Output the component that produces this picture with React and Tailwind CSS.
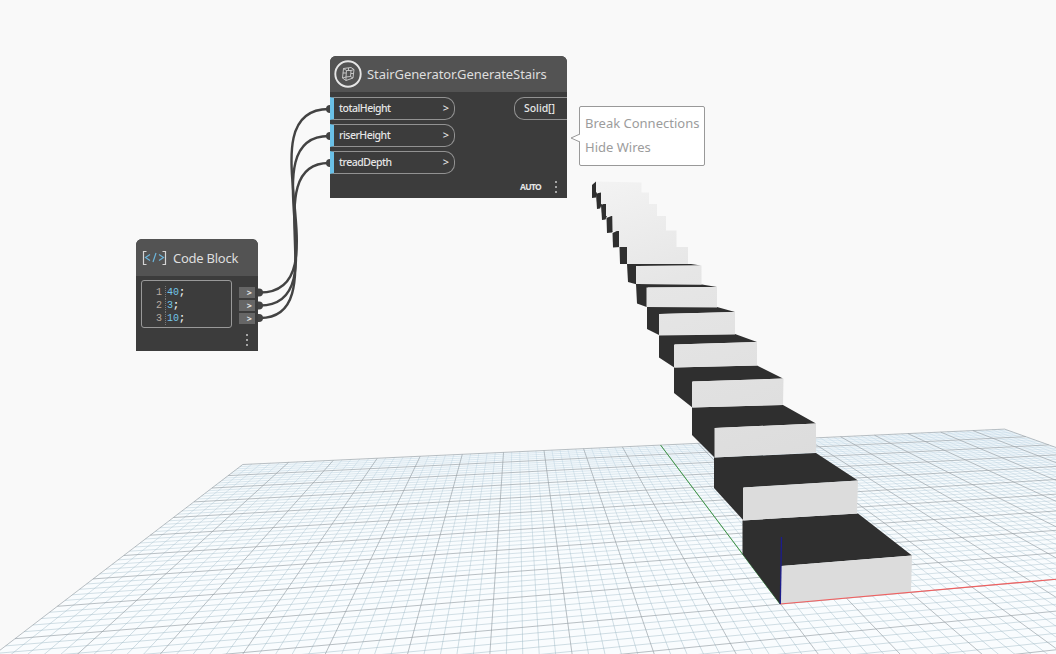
import React from "react";

// Ground-plane samples: [u, v, screenX, screenY], one unit per major grid square.
const SAMPLES = [
  [-10, 10, 243, 464.5],
  [0, 10, 660.5, 445],
  [5, 10, 840, 437],
  [10, 10, 1005, 429],
  [-10, 5, 150, 535],
  [-10, 1, 15, 639],
  [0, 0, 780, 604],
  [1, 0, 848, 598.3],
  [2, 0, 911, 592.5],
  [4, 0, 1030, 581.6],
];

// Least-squares fit of the plane-to-screen perspective transform.
function fitHomography(samples) {
  const n = 8;
  const m = Array.from({ length: n }, () => new Array(n + 1).fill(0));
  const add = (row) => {
    for (let i = 0; i < n; i++) for (let j = 0; j <= n; j++) m[i][j] += row[i] * row[j];
  };
  samples.forEach(([U, V, X, Y]) => {
    const u = U / 10, v = V / 10, x = X / 1000, y = Y / 1000;
    add([u, v, 1, 0, 0, 0, -u * x, -v * x, x]);
    add([0, 0, 0, u, v, 1, -u * y, -v * y, y]);
  });
  for (let c = 0; c < n; c++) {
    let p = c;
    for (let r = c + 1; r < n; r++) if (Math.abs(m[r][c]) > Math.abs(m[p][c])) p = r;
    [m[c], m[p]] = [m[p], m[c]];
    for (let r = 0; r < n; r++) {
      if (r === c) continue;
      const f = m[r][c] / m[c][c];
      for (let k = c; k <= n; k++) m[r][k] -= f * m[c][k];
    }
  }
  return m.map((row, i) => row[n] / row[i]);
}

const H = fitHomography(SAMPLES);
const project = (U, V) => {
  const u = U / 10, v = V / 10;
  const w = H[6] * u + H[7] * v + 1;
  return [
    (1000 * (H[0] * u + H[1] * v + H[2])) / w,
    (1000 * (H[3] * u + H[4] * v + H[5])) / w,
  ];
};
const NEAR = -2.6;
const seg = (a, b) =>
  `M${a[0].toFixed(1)} ${a[1].toFixed(1)}L${b[0].toFixed(1)} ${b[1].toFixed(1)}`;

const minor = [];
const major = [];
for (let i = -50; i <= 50; i++) {
  (i % 5 === 0 ? major : minor).push(seg(project(i / 5, 10), project(i / 5, NEAR)));
}
for (let i = Math.ceil(NEAR * 5); i <= 50; i++) {
  (i % 5 === 0 ? major : minor).push(seg(project(-10, i / 5), project(10, i / 5)));
}
const plane = [project(-10, 10), project(10, 10), project(10, NEAR), project(-10, NEAR)]
  .map((p) => p.join(","))
  .join(" ");

// Sides and treads of the solid (dark), then the risers (light).
const DARK = [
  "592,185 596,181.5 597,193 596,197.5 592,198",
  "596,194 601,192 602,204 600,208.5 597,209",
  "601,205 606,203 607,216 605.5,219.5 602,220",
  "606.5,218 612.5,215.5 613,231 612,232.5 607,233",
  "612.5,233 619,230 620,247 613,247.5",
  "619.5,247 627,246.5 628,264 620,264",
  "627,264 691,264 701,265.5 637,266 637,284.5 628,282",
  "636,284 702,284.5 717,287 648,287.5 648,307.5 637,303.5",
  "647,307 717,307 735,312 660,314 660,335.5 647,329",
  "659,335 735,334 757,342 675,344.5 675,368 659,357.5",
  "674,367.5 757,365.5 783,378.5 693,381.5 693,408 674,393",
  "692,407.5 783,405 816,423.5 715,428 715,458 692,435",
  "714,457.5 816,453 858,480.5 744,487.5 744,521 714,488",
  "742.5,520.5 858,513.5 912,555.5 781.5,566 780,604 742.5,554",
];
const LIGHT = [
  "596,181.5 641.5,182.5 641.5,192.5 649,192.5 649,204 657,204 657,216 666,216 666,230.5 676.5,230.5 676.5,247 688,247 688,264 627,264 627,247 619,247 619,231 612.5,231 612.5,216 606,216 606,204 601,204 601,192.5 596,192.5",
  "636,266 701.5,265.5 701.5,284.5 636,284",
  "646.5,287.5 717,287 717,307.5 646.5,307",
  "659,314 735,312 735,334.5 659,335.5",
  "674,344.5 757,342 757,365.5 674,367.5",
  "692,381.5 783.5,378.5 783,405 692,407.5",
  "714.5,428 816,423.5 816,452.5 714.5,457.5",
  "743,487.5 858,480.5 857,513.5 743,520.5",
  "781,566 912,555.5 911,592.5 780.5,604",
];

function Scene() {
  return (
    <svg className="[grid-area:1/1]" width="1056" height="654" viewBox="0 0 1056 654">
      <defs>
        <linearGradient id="haze" x1="0" y1="429" x2="0" y2="560" gradientUnits="userSpaceOnUse">
          <stop offset="0" stopColor="#f1f7fb" />
          <stop offset="0.5" stopColor="#f7fbfd" />
          <stop offset="1" stopColor="#f9fcfe" />
        </linearGradient>
        <linearGradient id="riser" x1="592" y1="181" x2="700" y2="500" gradientUnits="userSpaceOnUse">
          <stop offset="0" stopColor="#f3f3f3" />
          <stop offset="0.35" stopColor="#e6e6e6" />
          <stop offset="1" stopColor="#dcdcdc" />
        </linearGradient>
        <linearGradient id="fine" x1="0" y1="429" x2="0" y2="654" gradientUnits="userSpaceOnUse">
          <stop offset="0" stopColor="#a9c8dc" stopOpacity="0.36" />
          <stop offset="0.35" stopColor="#a3bdcb" stopOpacity="0.48" />
          <stop offset="1" stopColor="#9db8c4" stopOpacity="0.6" />
        </linearGradient>
      </defs>
      <polygon points={plane} fill="url(#haze)" />
      <path d={minor.join("")} stroke="url(#fine)" strokeWidth="0.8" fill="none" />
      <path d={major.join("")} stroke="#949ea4" strokeOpacity="0.72" strokeWidth="0.9" fill="none" />
      <path d={seg(project(0, 10), [780, 604])} stroke="#3f9a48" strokeWidth="1" />
      {DARK.map((p) => (
        <polygon key={p} points={p} fill="#2f2f2f" />
      ))}
      {LIGHT.map((p) => (
        <polygon key={p} points={p} fill="url(#riser)" />
      ))}
      <path d={seg([780, 604], project(10, 0))} stroke="#f06060" strokeWidth="1.1" />
      <path d="M780.3 604L781.5 537" stroke="#1c1c8c" strokeWidth="1.3" />
      <g fill="none" stroke="#434343" strokeWidth="2.4">
        <path d="M260 292.500C346 292.500 242 109 329 109" />
        <path d="M260 305.500C341 305.500 248 136 329 136" />
        <path d="M260 318C335 318 255 163 329 163" />
      </g>
      <g fill="#434343">
        {[292.5, 305.5, 318].map((y) => (
          <path key={y} d={`M258 ${y - 4}h1a4 4 0 0 1 0 8h-1z`} />
        ))}
        {[109, 136, 163].map((y) => (
          <path key={y} d={`M330 ${y - 4}a4 4 0 0 0 0 8z`} />
        ))}
      </g>
    </svg>
  );
}

function Dots() {
  return (
    <span className="flex w-[2px] flex-col gap-[3px]">
      <i className="size-[2px] bg-[#a5a5a5]" />
      <i className="size-[2px] bg-[#a5a5a5]" />
      <i className="size-[2px] bg-[#a5a5a5]" />
    </span>
  );
}

function Port({ name }) {
  return (
    <div className="flex h-[23px] w-[125px] items-center justify-between rounded-r-[10px] border border-l-4 border-[#929292] border-l-[#6ac0e7] pr-[5px] pl-[5px] text-[10.5px] font-medium text-[#e6e6e6]">
      <span className="tracking-[-0.5px]">{name}</span>
      <span className="pb-px text-[11px]">&gt;</span>
    </div>
  );
}

function StairNode() {
  return (
    <div className="mt-14 ml-[330px] flex h-[142px] w-[237px] flex-col self-start justify-self-start overflow-hidden rounded-t-md bg-[#3c3c3c] [grid-area:1/1]">
      <div className="flex h-9 shrink-0 items-center gap-[5px] bg-[#535353] pl-[4px] text-[#dedede]">
        <svg width="28" height="28" viewBox="0 0 28 28" fill="none" stroke="#e6e6e6">
          <circle cx="14" cy="14" r="12.700" strokeWidth="1.900" />
          <g stroke="#cfcfcf" strokeWidth="0.9">
            <path d="M9.500 8.500L17 7.500L20 9.500L19 18L12 20.500L8.500 18Z" />
            <path d="M12.500 10.500L17 10.500L16.500 16.500L12 17Z" />
            <path d="M9.500 8.500L12.500 10.500M20 9.500L17 10.500M19 18L16.500 16.500M8.500 18L12 17M12 17V20.500M14.500 8V10.500M8.800 13H12M17 13.500H19.500" />
          </g>
        </svg>
        <span className="pt-px text-[13px] tracking-[-0.07px] whitespace-nowrap">StairGenerator.GenerateStairs</span>
      </div>
      <div className="flex justify-between pt-[5px]">
        <div className="flex flex-col gap-1">
          <Port name="totalHeight" />
          <Port name="riserHeight" />
          <Port name="treadDepth" />
        </div>
        <div className="flex h-[23px] w-[53px] items-center rounded-l-[10px] border border-r-0 border-[#929292] pl-[9px] text-[10.5px] font-medium tracking-[-0.05px] text-[#e6e6e6]">
          Solid[]
        </div>
      </div>
      <div className="mt-[7px] flex items-center justify-end gap-[14px] pr-[10px] text-[8.5px] leading-3 font-bold text-[#e6e6e6]">
        <span className="tracking-[-0.7px]">AUTO</span>
        <Dots />
      </div>
    </div>
  );
}

function CodeBlock() {
  return (
    <div className="mt-[239px] ml-[136px] flex h-28 w-[122px] flex-col self-start justify-self-start overflow-hidden rounded-t-md bg-[#3c3c3c] [grid-area:1/1]">
      <div className="flex h-[37px] shrink-0 items-center gap-[6px] bg-[#535353] pl-[6px] text-[#dedede]">
        <svg width="25" height="16" viewBox="0 0 25 16" fill="none" strokeWidth="1.200">
          <path d="M4.500 1.500H1.500V14.500H4.500M20.500 1.500H23.500V14.500H20.500" stroke="#d5d5d5" />
          <path d="M8 4.500L3.500 7.500L8 10.500M17 4.500L21.500 7.500L17 10.500M14 3L11 12" stroke="#6cb6dc" />
        </svg>
        <span className="pt-[2px] text-[13px] tracking-[-0.25px] whitespace-nowrap">Code Block</span>
      </div>
      <div className="flex justify-between pt-[4px] pr-[3px] pl-[5px]">
        <div className="flex h-12 w-[91px] flex-col rounded-[3px] border border-[#999999] pt-[5px] pl-[14px] font-['Liberation_Mono',monospace] text-[10px] leading-[13px]">
          {["40", "3", "10"].map((n, i) => (
            <div key={n} className="flex">
              <span className="w-[10px] border-r border-dotted border-[#777777] text-[#b8aaa0]">{i + 1}</span>
              <span className="pl-px text-[#72c5e8]">{n}</span>
              <span className="font-bold text-[#eeeeee]">;</span>
            </div>
          ))}
        </div>
        <div className="flex flex-col gap-[2px] pt-[7px]">
          {[0, 1, 2].map((i) => (
            <div key={i} className="flex h-[11px] w-4 items-center justify-end bg-[#666666] pr-[3px] text-[9px] font-bold text-[#e6e6e6]">
              &gt;
            </div>
          ))}
        </div>
      </div>
      <div className="mt-[6px] flex justify-end pr-[10px]">
        <Dots />
      </div>
    </div>
  );
}

function Menu() {
  return (
    <div className="mt-[106px] ml-[570px] flex items-center self-start justify-self-start [grid-area:1/1]">
      <svg className="z-10 -mr-px mb-[-4px]" width="10" height="10" viewBox="0 0 10 10">
        <path d="M10 1L1 5L10 9" fill="#fff" stroke="#999" />
      </svg>
      <div className="flex h-[60px] w-[126px] flex-col rounded-[2px] border border-[#999999] bg-white pt-[4px] pl-[5px] text-[13px] leading-6 whitespace-nowrap text-[#9c9c9c]">
        <span>Break Connections</span>
        <span>Hide Wires</span>
      </div>
    </div>
  );
}

export default function App() {
  return (
    <main className="grid h-[654px] w-[1056px] overflow-hidden bg-[#f9f9f9] font-['Noto_Sans',sans-serif]">
      <Scene />
      <StairNode />
      <CodeBlock />
      <Menu />
    </main>
  );
}
